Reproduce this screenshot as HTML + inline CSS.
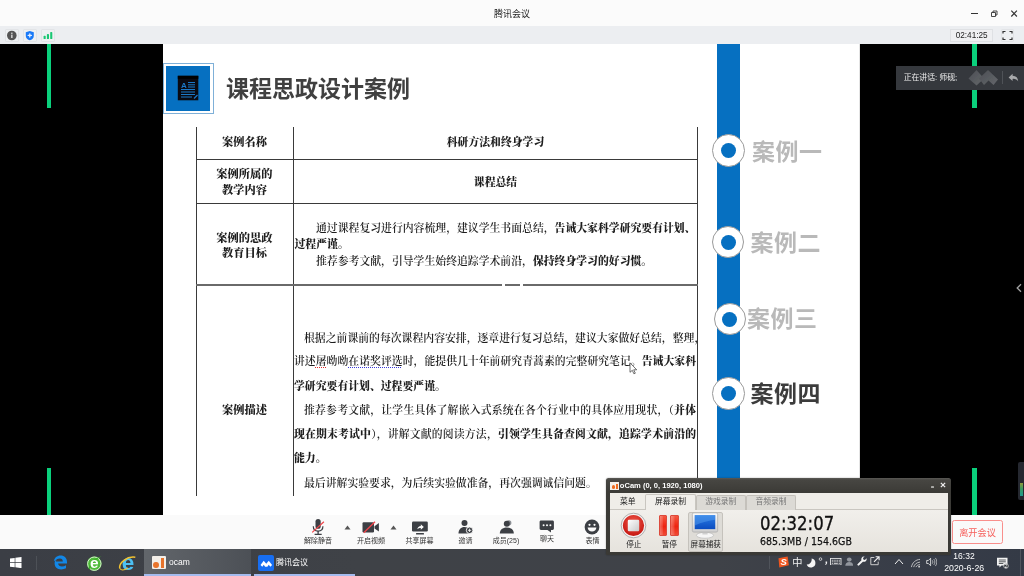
<!DOCTYPE html>
<html lang="zh-CN">
<head>
<meta charset="utf-8">
<title>腾讯会议</title>
<style>
*{box-sizing:border-box;margin:0;padding:0}
html,body{width:1024px;height:576px;overflow:hidden;background:#000}
body{position:relative;font-family:"Liberation Sans","Noto Sans CJK SC",sans-serif;color:#222}
.abs{position:absolute}
/* ---------- title bar ---------- */
#titlebar{left:0;top:0;width:1024px;height:26px;background:#fbfbfb}
#titlebar .ttl{left:0;width:1024px;top:7.400px;text-align:center;font-size:9px;line-height:14px;color:#222}
#topbar{left:0;top:26px;width:1024px;height:18px;background:#eceef1}
.tbtn{top:3px;width:13.500px;height:13px;background:#eef0f2;border:1px solid #e2e4e7;border-radius:1px}
#timer{left:950.400px;top:3.300px;width:42.500px;height:12.600px;background:#eff0f2;border:1px solid #dfe1e4;font-size:8.200px;line-height:11.200px;text-align:center;color:#222}
#titlebar>*,#topbar>*,#bbar>*,#taskbar>*,#ocam>*,.ov{filter:blur(.3px)}
/* ---------- stage ---------- */
#stage{left:0;top:44px;width:1024px;height:471px;background:#000}
.gbar{width:4.300px;background:#0ad07c}
#slide{left:163px;top:0;width:697px;height:471px;background:#fff;overflow:hidden;filter:blur(.35px)}
#slide .title{left:63px;top:27px;font-size:23px;line-height:36px;font-weight:700;color:#404040;white-space:nowrap}
.hl{background:#3a3a3a;height:1.3px}
.vl{background:#3a3a3a;width:1.3px}
.cell{font-family:"Liberation Serif","Noto Serif CJK SC",serif;font-size:10.85px;font-weight:600;color:#1e1e1e;white-space:nowrap;margin-top:-.8px}
.b{font-weight:900}
.ln{line-height:16px;text-align:justify;text-align-last:justify}
.wr{text-decoration:underline dotted #e02a2a 1.100px;text-underline-offset:2px}
.wb{text-decoration:underline dotted #3a3ad8 1.100px;text-underline-offset:2px}
.lab{text-align:center;font-weight:900;width:97px;left:33px;line-height:16px;font-size:11.250px}
.case{font-size:23px;letter-spacing:.5px;font-weight:700;line-height:30px;color:#b9b9b9;white-space:nowrap;margin-top:1px}
.ring{width:32px;height:32px;border-radius:50%;background:#fff;border:1.700px solid #9a9a9a;display:flex;align-items:center;justify-content:center}
.ring i{display:block;width:15px;height:15px;border-radius:50%;background:#0670c1}
/* ---------- bottom bar ---------- */
#bbar{left:0;top:514.600px;width:1024px;height:34.400px;background:#fafafa}
.bl{top:21px;font-size:7px;line-height:10px;color:#333;text-align:center;width:50px;white-space:nowrap}
.ot{top:17px;font-size:7.800px;line-height:14px;text-align:center;color:#222;white-space:nowrap}
.ol{top:60.500px;font-size:7.600px;line-height:11px;text-align:center;color:#222;white-space:nowrap}
.pb{top:37.300px;width:8.300px;height:21.200px;border-radius:1px;background:linear-gradient(90deg,rgba(255,255,255,.30),rgba(255,255,255,.12) 45%,rgba(255,255,255,0) 55%),linear-gradient(#f4563f,#ee2410 55%,#f04a34);border:.6px solid #dc4a3c}
#taskbar{left:0;top:549px;width:1024px;height:27px;background:linear-gradient(90deg,#3b3e45 0%,#3f4247 35%,#3f4248 70%,#383d48 88%,#343a46 100%)}
</style>
</head>
<body>
<!-- title bar -->
<div id="titlebar" class="abs">
  <div class="abs ttl">腾讯会议</div>
  <svg class="abs" style="left:966px;top:5px" width="56" height="16" viewBox="0 0 56 16">
    <path d="M5 8.5h7" stroke="#333" stroke-width="1" fill="none"/>
    <path d="M25.5 7.5h4v4h-4z M27 7.5v-1.5h4v4h-1.5" stroke="#333" stroke-width="0.9" fill="none"/>
    <path d="M45.300 5.700l5.600 5.800M50.900 5.700l-5.600 5.800" stroke="#333" stroke-width="1.150" fill="none"/>
  </svg>
</div>
<div id="topbar" class="abs">
  <div class="abs tbtn" style="left:5px"></div>
  <div class="abs tbtn" style="left:23px"></div>
  <div class="abs tbtn" style="left:41px"></div>
  <svg class="abs" style="left:5px;top:3px" width="50" height="13" viewBox="0 0 50 13">
    <circle cx="6.8" cy="6.5" r="4.8" fill="#555"/>
    <rect x="6.2" y="5.6" width="1.3" height="3.4" fill="#e6e6e6"/><rect x="6.2" y="3.6" width="1.3" height="1.3" fill="#e6e6e6"/>
    <path d="M24.8 2l4 1.3v3.4c0 2.4-1.8 3.9-4 4.6-2.200-.7-4-2.200-4-4.600V3.300z" fill="#1a7af8"/>
    <path d="M24.800 4.800v3.200M23.200 6.400h3.200" stroke="#e6efff" stroke-width="1.300" stroke-linecap="round"/>
    <rect x="38.600" y="6.800" width="2.100" height="3.300" rx=".7" fill="#1ac773"/>
    <rect x="41.900" y="5.100" width="2.100" height="5" rx=".7" fill="#1ac773"/>
    <rect x="45.200" y="3" width="2.100" height="7.100" rx=".7" fill="#1ac773"/>
  </svg>
  <div id="timer" class="abs">02:41:25</div>
  <div class="abs tbtn" style="left:1000.500px;width:13.500px"></div>
  <svg class="abs" style="left:1001px;top:3px" width="13" height="13" viewBox="0 0 13 13">
    <path d="M2 4.500V2.500h2.500M8.500 2.500H11v2M11 8.500v2H8.500M4.500 10.500H2v-2" stroke="#333" stroke-width="1.200" fill="none"/>
  </svg>
</div>

<!-- stage -->
<div id="stage" class="abs">
  <div class="abs gbar" style="left:46.500px;top:0;height:64px"></div>
  <div class="abs gbar" style="left:46.500px;top:423.700px;height:47.300px"></div>
  <div class="abs gbar" style="left:972.400px;top:0;height:64px;width:4.400px"></div>
  <div class="abs gbar" style="left:972.400px;top:423.700px;height:47.300px;width:4.400px"></div>


  <!-- speaking overlay -->
  <div class="abs" style="left:896.200px;top:21.600px;width:128px;height:24.100px;background:#35383d"></div>
  <div class="abs ov" style="left:903.700px;top:28.300px;font-size:7.900px;line-height:12px;color:#ececec;white-space:nowrap;letter-spacing:-.05px">正在讲话: 师砚;</div>
  <svg class="abs" style="left:964px;top:22px" width="40" height="24" viewBox="0 0 40 24">
    <defs><filter id="bl" x="-20%" y="-20%" width="140%" height="140%"><feGaussianBlur stdDeviation=".7"/></filter>
    <linearGradient id="dg" x1="0" y1="0" x2="1" y2="1"><stop offset="0" stop-color="#4b4e53"/><stop offset="1" stop-color="#64676b"/></linearGradient></defs>
    <g filter="url(#bl)">
      <path d="M4.500 12.500L12.500 4l7.500 8.500-7.500 7z" fill="url(#dg)"/>
      <path d="M15 12.500L24 4l10 9.500-4.500 5.500-5-4.500-4.500 4.500z" fill="url(#dg)"/>
    </g>
  </svg>
  <div class="abs" style="left:1001.800px;top:27px;width:1px;height:13px;background:#4f5257"></div>
  <svg class="abs ov" style="left:1008px;top:28.500px" width="11" height="10" viewBox="0 0 11 10">
    <path d="M4.600 .8L.6 4.400l4 3.600V5.900c2.600-.2 4.400.6 5.600 2.600C10 4.800 8.200 2.900 4.600 2.800z" fill="#a9aaac"/>
  </svg>
  <svg class="abs" style="left:1014.500px;top:239px" width="8" height="10" viewBox="0 0 8 10"><path d="M6 1.300L2.200 5 6 8.700" stroke="#a2a2a2" stroke-width="1.300" fill="none"/></svg>
  <!-- right edge volume widget -->
  <div class="abs" style="left:1018px;top:418px;width:8px;height:38px;background:#252830;border-radius:2px"></div>
  <div class="abs" style="left:1020px;top:439.300px;width:2.700px;height:13px;background:linear-gradient(#8f9a3c,#379a62 45%,#219a8e)"></div>
  <div id="slide" class="abs">
    <!-- header icon -->
    <div class="abs" style="left:0.200px;top:19.200px;width:50.800px;height:51px;border:1px solid #7fb0d8;background:#fff"></div>
    <div class="abs" style="left:3px;top:22px;width:44.400px;height:45.200px;background:#0670c1"></div>
    <svg class="abs" style="left:14px;top:31px" width="23" height="27" viewBox="0 0 23 27">
      <rect x="0.800" y="0.800" width="20.500" height="24.500" fill="#0a0a12"/>
      <rect x="0.800" y="0.800" width="20.500" height="3" fill="#000"/>
      <text x="4" y="12.500" font-family="Liberation Sans, sans-serif" font-weight="700" font-size="8" fill="#1b78c8">A</text>
      <path d="M11 7.500h7M11 9.800h7M11 12h7M4 14.500h14M4 17h14M4 19.500h14M4 22h11" stroke="#1b78c8" stroke-width="1"/>
      <path d="M17 23.500l3.500-3.500" stroke="#1b78c8" stroke-width="1.200"/>
    </svg>
    <div class="abs title">课程思政设计案例</div>

    <!-- table lines (coords relative to slide: x-163, y-44) -->
    <div class="abs vl" style="left:32.800px;top:83px;height:369px"></div>
    <div class="abs vl" style="left:129.800px;top:83px;height:369px"></div>
    <div class="abs vl" style="left:533.800px;top:83px;height:369px"></div>
    <div class="abs hl" style="left:33px;top:115px;width:502px"></div>
    <div class="abs hl" style="left:33px;top:158.800px;width:502px"></div>
    <div class="abs hl" style="left:33px;top:240.400px;width:502px;height:1.700px;background:#6a6a6a"></div>
    <div class="abs" style="left:338.500px;top:239px;width:3px;height:4px;background:#fff"></div>
    <div class="abs" style="left:356.800px;top:239px;width:3.200px;height:4px;background:#fff"></div>
    <!-- row labels -->
    <div class="abs cell lab" style="top:91px">案例名称</div>
    <div class="abs cell lab" style="top:123.100px">案例所属的<br>教学内容</div>
    <div class="abs cell lab" style="top:187.500px;line-height:15.500px">案例的思政<br>教育目标</div>
    <div class="abs cell lab" style="top:358.500px">案例描述</div>
    <!-- row 1/2 content -->
    <div class="abs cell b" style="left:131px;width:403px;text-align:center;top:91px;line-height:16px">科研方法和终身学习</div>
    <div class="abs cell b" style="left:131px;width:403px;text-align:center;top:130.500px;line-height:16px">课程总结</div>
    <!-- row 3 content -->
    <div class="abs cell ln" style="left:153px;top:177px;width:379px">通过课程复习进行内容梳理，建议学生书面总结，<span class="b">告诫大家科学研究要有计划、</span></div>
    <div class="abs cell" style="left:131.500px;top:193px;line-height:16px"><span class="b">过程严谨。</span></div>
    <div class="abs cell" style="left:153px;top:209.500px;line-height:16px">推荐参考文献，引导学生始终追踪学术前沿，<span class="b">保持终身学习的好习惯。</span></div>
    <!-- row 4 content -->
    <div class="abs cell ln" style="left:141px;top:286.800px;width:390px">根据之前课前的每次课程内容安排，逐章进行复习总结，建议大家做好总结，整理，</div>
    <div class="abs cell ln" style="left:131px;top:310px;width:402px">讲述<span class="wr">屠</span>呦呦<span class="wb">在诺奖评选</span>时，能提供几十年前研究青蒿素的完整研究笔记。<span class="b">告诫大家科</span></div>
    <div class="abs cell" style="left:131px;top:334.300px;line-height:16px"><span class="b">学研究要有计划、过程要严谨。</span></div>
    <div class="abs cell ln" style="left:141px;top:358.800px;width:392px">推荐参考文献，让学生具体了解嵌入式系统在各个行业中的具体应用现状，（<span class="b">并体</span></div>
    <div class="abs cell ln" style="left:131px;top:382.600px;width:402px"><span class="b">现在期末考试中</span>），讲解文献的阅读方法，<span class="b">引领学生具备查阅文献，追踪学术前沿的</span></div>
    <div class="abs cell" style="left:131px;top:407px;line-height:16px"><span class="b">能力。</span></div>
    <div class="abs cell" style="left:141px;top:431.300px;line-height:16px">最后讲解实验要求，为后续实验做准备，再次强调诚信问题。</div>
    <svg class="abs" style="left:466px;top:318px" width="9" height="13" viewBox="0 0 9 13"><path d="M1 .8v9.500l2.300-2 1.600 3.500 1.400-.6-1.600-3.400h3z" fill="#fff" stroke="#333" stroke-width=".7"/></svg>
    <!-- right nav -->
    <div class="abs" style="left:554px;top:0;width:23.300px;height:471px;background:#0670c1"></div>
    <div class="abs ring" style="left:549.200px;top:90.200px;width:33px;height:33px"><i></i></div>
    <div class="abs ring" style="left:549.200px;top:182.100px"><i></i></div>
    <div class="abs ring" style="left:550.800px;top:259.100px"><i></i></div>
    <div class="abs ring" style="left:549.200px;top:333.200px;width:32.500px;height:32.500px"><i></i></div>
    <div class="abs case" style="left:589px;top:92px">案例一</div>
    <div class="abs case" style="left:587.500px;top:183px">案例二</div>
    <div class="abs case" style="left:584px;top:259px">案例三</div>
    <div class="abs case" style="left:587.500px;top:333.500px;color:#3c3c3c">案例四</div>
    <div class="abs" style="left:695.500px;top:0;width:1.500px;height:471px;background:#e4e4e4"></div>
  </div>
</div>

<div id="bbar" class="abs">
  <!-- mic muted -->
  <svg class="abs" style="left:308px;top:3px" width="20" height="19" viewBox="0 0 20 19">
    <rect x="7.500" y="1" width="5.200" height="9.800" rx="2.600" fill="#3c3f44"/>
    <path d="M5.300 8.300c0 3 2 4.800 4.800 4.800s4.800-1.800 4.800-4.800" stroke="#3c3f44" stroke-width="1.200" fill="none"/>
    <path d="M10.100 13.100v2.800M6.600 16.300h7.100" stroke="#3c3f44" stroke-width="1.300" fill="none"/>
    <path d="M4.200 14.400L15.900 3.700" stroke="#f0444a" stroke-width="1.200"/>
  </svg>
  <div class="abs bl" style="left:293px">解除静音</div>
  <svg class="abs" style="left:344px;top:10px" width="7" height="5" viewBox="0 0 7 5"><path d="M3.500 .5L6.500 4.500H.5z" fill="#555"/></svg>
  <!-- video off -->
  <svg class="abs" style="left:361px;top:5px" width="20" height="15" viewBox="0 0 20 15">
    <rect x="1.500" y="2.200" width="11.500" height="10.200" rx="1.200" fill="#3c3f44"/>
    <path d="M13.500 6.200l4.400-3.200v8.600l-4.400-3.200z" fill="#3c3f44"/>
    <path d="M2.750 12.800L14 1.800" stroke="#f0444a" stroke-width="1.300"/>
  </svg>
  <div class="abs bl" style="left:346px">开启视频</div>
  <svg class="abs" style="left:389.500px;top:10px" width="7" height="5" viewBox="0 0 7 5"><path d="M3.500 .5L6.500 4.500H.5z" fill="#555"/></svg>
  <!-- share screen -->
  <svg class="abs" style="left:411px;top:5px" width="18" height="16" viewBox="0 0 18 16">
    <rect x="1" y="1.500" width="15.800" height="10" rx="1.200" fill="#3c3f44"/>
    <rect x="5" y="13" width="8" height="1.500" rx=".6" fill="#3c3f44"/>
    <path d="M6.300 9.300c.3-2 1.600-3.200 3.500-3.300V4.300l3 2.700-3 2.700V8c-1.400 0-2.500.4-3.500 1.300z" fill="#fafafa"/>
  </svg>
  <div class="abs bl" style="left:394.500px">共享屏幕</div>
  <!-- invite -->
  <svg class="abs" style="left:457px;top:4.500px" width="18" height="16" viewBox="0 0 18 16">
    <circle cx="7.500" cy="4" r="3" fill="#3c3f44"/>
    <path d="M1.500 14.500c0-4 2.500-6.500 6-6.500 2 0 3.600.8 4.600 2.200V14.500z" fill="#3c3f44"/>
    <circle cx="12.600" cy="11.300" r="3.300" fill="#3c3f44" stroke="#fafafa" stroke-width=".9"/>
    <path d="M12.600 9.600v3.400M10.900 11.300h3.400" stroke="#fafafa" stroke-width=".9"/>
  </svg>
  <div class="abs bl" style="left:440.500px">邀请</div>
  <!-- members -->
  <svg class="abs" style="left:498px;top:4.500px" width="18" height="16" viewBox="0 0 18 16">
    <circle cx="10.800" cy="3.800" r="2.600" fill="#8b8e93"/>
    <circle cx="8.800" cy="4.800" r="3" fill="#3c3f44"/>
    <path d="M1.800 14.500c0-3.800 2.800-6 7-6s7 2.200 7 6z" fill="#3c3f44"/>
  </svg>
  <div class="abs bl" style="left:481px">成员(25)</div>
  <!-- chat -->
  <svg class="abs" style="left:539px;top:5px" width="16" height="13" viewBox="0 0 16 13">
    <path d="M2 .6h11.500c.8 0 1.400.6 1.400 1.400v6.600c0 .8-.6 1.400-1.400 1.400H12v2.600L8.500 10H2C1.200 10 .6 9.400.6 8.600V2C.6 1.200 1.200.6 2 .6z" fill="#3c3f44"/>
    <circle cx="4.600" cy="5.300" r="1" fill="#fafafa"/><circle cx="8" cy="5.300" r="1" fill="#fafafa"/><circle cx="11.400" cy="5.300" r="1" fill="#fafafa"/>
  </svg>
  <div class="abs bl" style="left:522px;top:19.500px">聊天</div>
  <!-- emoji -->
  <svg class="abs" style="left:584px;top:4.500px" width="16" height="16" viewBox="0 0 16 16">
    <circle cx="8" cy="8" r="7.400" fill="#3c3f44"/>
    <circle cx="5.500" cy="5.800" r="1.100" fill="#fafafa"/><circle cx="10.500" cy="5.800" r="1.100" fill="#fafafa"/>
    <path d="M3.600 8.600h8.800c-.3 2.600-2 4-4.400 4s-4.100-1.400-4.400-4z" fill="#fafafa"/>
  </svg>
  <div class="abs bl" style="left:567.500px">表情</div>
  <!-- leave -->
  <div class="abs" style="left:952px;top:5.900px;width:51px;height:24px;border:1.200px solid #f98f8c;border-radius:2.500px;color:#f6605c;font-size:9.200px;line-height:24.400px;text-align:center">离开会议</div>
</div>
<div id="taskbar" class="abs">
  <!-- start -->
  <svg class="abs" style="left:10.200px;top:7.800px" width="11.500" height="11.200" viewBox="0 0 12 12" preserveAspectRatio="none">
    <path d="M0 1.700L4.900 1v4.700H0zM5.600.9L12 0v5.700H5.600zM0 6.400h4.900v4.700L0 10.400zM5.600 6.400H12V12l-6.400-.9z" fill="#fff"/>
  </svg>
  <div class="abs" style="left:35.600px;top:6.500px;width:1px;height:14px;background:#4d5157"></div>
  <!-- edge -->
  <svg class="abs" style="left:53px;top:6.300px" width="15" height="15" viewBox="0 0 15 15">
    <path d="M.8 6.600C1.300 2.900 4 .6 7.600.6c3.800 0 6.400 2.600 6.400 6.500v1.500H5.100c.2 1.900 1.700 2.900 3.800 2.900 1.500 0 2.800-.4 4.100-1.200v3c-1.300.7-2.900 1.100-4.700 1.100-4.100 0-6.700-2.400-6.700-6.200 0-1.800.9-3.400 2.500-4.400-.7.800-1.100 1.700-1.200 2.700h6.900c0-1.700-1-2.900-2.800-2.900C4.700 3.600 2.400 4.700.8 6.600z" fill="#1387e6"/>
  </svg>
  <!-- 360 -->
  <svg class="abs" style="left:85.500px;top:5.500px" width="17" height="17" viewBox="0 0 17 17">
    <circle cx="8.300" cy="8.700" r="7.200" fill="#4fbb3a"/>
    <circle cx="8.300" cy="8.700" r="6.700" fill="none" stroke="#e4f5dc" stroke-width=".9"/>
    <path d="M2.500 13.500C3.500 7 9 2.500 15.500 1.500 11 3.500 6.500 7.500 3.600 14.500z" fill="#3fae2c"/>
    <text x="8.300" y="13.300" text-anchor="middle" font-family="Liberation Sans, sans-serif" font-weight="700" font-size="15.500" fill="#fff">e</text>
  </svg>
  <!-- IE -->
  <svg class="abs" style="left:118px;top:4px" width="19" height="20" viewBox="0 0 19 20">
    <text x="10" y="17.300" text-anchor="middle" font-family="Liberation Sans, sans-serif" font-weight="700" font-size="22.500" fill="#4cc0f3">e</text>
    <path d="M1.800 15.500C.5 10 9 3 17.300 4.300" stroke="#f1c232" stroke-width="1.500" fill="none"/>
    <path d="M1.800 15.500c1.500 2 5 1.500 8-.5" stroke="#f1c232" stroke-width="1.100" fill="none"/>
  </svg>
  <!-- ocam task -->
  <div class="abs" style="left:144px;top:0;width:106.700px;height:27px;background:linear-gradient(90deg,#62666b,#4c5056)"></div>
  <div class="abs" style="left:144px;top:24.600px;width:106.700px;height:2.400px;background:#a4bbee"></div>
  <div class="abs" style="left:151.500px;top:7px;width:14px;height:13px;background:#f3efe9;border-radius:1px"></div>
  <div class="abs" style="left:153px;top:12.500px;width:5.500px;height:6px;background:#e8742c;border-radius:50%"></div>
  <div class="abs" style="left:160.500px;top:9px;width:3px;height:10px;background:#e8742c"></div>
  <div class="abs" style="left:169px;top:7px;font-size:8.500px;line-height:13px;color:#fff">ocam</div>
  <!-- tencent meeting task -->
  <div class="abs" style="left:254px;top:24.600px;width:101px;height:2.400px;background:#a4bbee"></div>
  <div class="abs" style="left:257.700px;top:5.600px;width:16.500px;height:16px;background:#176ef2;border-radius:2px"></div>
  <svg class="abs" style="left:257.700px;top:5.600px" width="16.500" height="16" viewBox="0 0 15 14" preserveAspectRatio="none">
    <path d="M2.300 8.800L5.200 5l2.300 2.600L9.800 5l3 3.800-1.600 1.400-1.400-1.600-1.300 1.600H6.500L5.200 8.600 3.900 10.200z" fill="#fff"/>
  </svg>
  <div class="abs" style="left:276px;top:7px;font-size:8px;line-height:13px;color:#fff;white-space:nowrap">腾讯会议</div>
  <!-- tray -->
  <div class="abs" style="left:769.200px;top:7.300px;width:1.200px;height:13px;background:#50545b"></div>
  <svg class="abs" style="left:777px;top:6.500px" width="13" height="12" viewBox="0 0 13 12">
    <path d="M1.500 2.200L10.600.6l1.300 8.600-9.600 2.200z" fill="#f0561f"/>
    <text x="6.600" y="9.300" text-anchor="middle" font-family="Liberation Sans, sans-serif" font-weight="700" font-style="italic" font-size="9.500" fill="#fff">S</text>
  </svg>
  <div class="abs" style="left:792.300px;top:7px;font-size:10.200px;line-height:13px;color:#f2f2f2">中</div>
  <svg class="abs" style="left:806px;top:9px" width="10" height="10" viewBox="0 0 10 10"><path d="M5.600.6A4.500 4.500 0 1 1 .7 6.600 5 5 0 0 0 5.600.6z" fill="#f4f4f4"/></svg>
  <svg class="abs" style="left:818px;top:7.800px" width="11" height="9" viewBox="0 0 11 9">
    <circle cx="2.500" cy="2.100" r="1.300" fill="none" stroke="#e8e8e8" stroke-width=".8"/>
    <path d="M7.600 4.600h1.500v1.600L8 8H7.200l.7-1.800h-.3z" fill="#f2f2f2"/>
  </svg>
  <svg class="abs" style="left:830.300px;top:8.700px" width="11.500" height="7.600" viewBox="0 0 11.500 8" preserveAspectRatio="none">
    <rect x=".5" y=".5" width="10.500" height="7" fill="none" stroke="#e6e6e6" stroke-width=".9"/>
    <path d="M1.800 2.400h8M1.800 4h8" stroke="#e6e6e6" stroke-width=".9" stroke-dasharray="1.100 .7"/>
    <path d="M1.800 5.700h1.100M3.800 5.700h4M8.700 5.700h1.100" stroke="#e6e6e6" stroke-width=".9"/>
  </svg>
  <svg class="abs" style="left:844.800px;top:7.600px" width="8.500" height="9.300" viewBox="0 0 9 11" preserveAspectRatio="none">
    <circle cx="4.500" cy="3" r="2.500" fill="#91959c"/><path d="M.3 10.500C.3 7.500 2 6 4.500 6s4.200 1.500 4.200 4.500z" fill="#91959c"/>
  </svg>
  <svg class="abs" style="left:856.500px;top:7.200px" width="10" height="10" viewBox="0 0 11 11">
    <path d="M7.600.6a3 3 0 0 0-2.700 4L.8 8.700a1.100 1.100 0 0 0 1.600 1.600l4.100-4.100a3 3 0 0 0 4-3.600L8.700 4.400 7 3.900 6.600 2.300 8.400.6a3 3 0 0 0-.8 0z" fill="#f2f2f2"/>
  </svg>
  <svg class="abs" style="left:869.500px;top:7.300px" width="10" height="9.500" viewBox="0 0 10 9.500">
    <path d="M4.300 1.500H.8v7.200h7.400V5.600" stroke="#d9d9d9" stroke-width=".9" fill="none"/>
    <path d="M4 5.800L8.800 1M5.600.7h3.500v3.500" stroke="#f2f2f2" stroke-width="1.100" fill="none"/>
  </svg>
  <svg class="abs" style="left:894px;top:9px" width="10" height="7" viewBox="0 0 10 7"><path d="M1 6L5 1.500 9 6" stroke="#f2f2f2" stroke-width="1" fill="none"/></svg>
  <svg class="abs" style="left:910px;top:8.500px" width="11" height="10" viewBox="0 0 12 11">
    <path d="M1.500 10C2.500 5 6 2 11 1.500" stroke="#d8d8d8" stroke-width=".9" fill="none"/>
    <path d="M4 10C4.800 7 7 5 11 4.500" stroke="#d8d8d8" stroke-width=".9" fill="none"/>
    <path d="M6.500 10C7 8.500 8.500 7.500 11 7.300" stroke="#d8d8d8" stroke-width=".9" fill="none"/>
    <circle cx="10" cy="9.500" r="1" fill="#d8d8d8"/>
  </svg>
  <svg class="abs" style="left:925.500px;top:7.800px" width="11.300" height="10" viewBox="0 0 13 11" preserveAspectRatio="none">
    <path d="M.8 3.800h2l2.500-2.400v8.200L2.800 7.200h-2z" fill="none" stroke="#f2f2f2" stroke-width=".9"/>
    <path d="M7.200 3.600c.9 1.100.9 2.700 0 3.800M9 2.300c1.600 1.800 1.600 4.600 0 6.400M10.800 1c2.200 2.500 2.200 6.500 0 9" stroke="#d8d8d8" stroke-width=".8" fill="none"/>
  </svg>
  <div class="abs" style="left:934px;top:2.200px;width:60px;text-align:center;font-size:8.500px;line-height:11px;color:#fff">16:32</div>
  <div class="abs" style="left:934.200px;top:14.300px;width:60px;text-align:center;font-size:8.750px;line-height:11px;color:#fff">2020-6-26</div>
  <svg class="abs" style="left:995.800px;top:7.600px" width="13" height="12" viewBox="0 0 13 12">
    <path d="M1 .8h10.500v7.600H5.500L3.500 10.600V8.400H1z" fill="#f2f2f2"/>
    <path d="M2.800 3h7M2.800 4.800h7M2.800 6.500h4.500" stroke="#2f3339" stroke-width=".8"/>
    <circle cx="10" cy="9" r="2.300" fill="#2f3339" stroke="#cfcfcf" stroke-width=".8"/>
    <text x="10" y="10.700" text-anchor="middle" font-family="Liberation Sans, sans-serif" font-size="4.500" fill="#fff">2</text>
  </svg>
  <div class="abs" style="left:1020.300px;top:0;width:1px;height:27px;background:#50555e"></div>
</div>

<!-- oCam window -->
<div id="ocam" class="abs" style="left:606.250px;top:478px;width:344.800px;height:77px;background:linear-gradient(#5a5955,#474642 2px,#3c3b37 14px,#3a3935);border-radius:2.500px 2.500px 1px 1px;box-shadow:0 0 1.500px rgba(0,0,0,.45)">
  <div class="abs" style="left:4px;top:4.200px;width:8.800px;height:7.800px;background:#f5f1ea"></div>
  <div class="abs" style="left:5.500px;top:7.300px;width:3.600px;height:3.600px;background:#ee6a1e;border-radius:50%"></div>
  <div class="abs" style="left:10.200px;top:5.500px;width:1.800px;height:5.800px;background:#ee6a1e"></div>
  <div class="abs" style="left:13.600px;top:1.500px;font-size:7.550px;line-height:12px;font-weight:700;color:#fff;white-space:nowrap">oCam (0, 0, 1920, 1080)</div>
  <div class="abs" style="left:325px;top:7.800px;width:3.200px;height:2px;background:#a9a9a6;border-radius:.5px"></div>
  <svg class="abs" style="left:334px;top:4.300px" width="6" height="6" viewBox="0 0 7 7"><path d="M1 1l5 5M6 1L1 6" stroke="#ededed" stroke-width="1.500"/></svg>
  <!-- body -->
  <div class="abs" style="left:3.600px;top:14.600px;width:338px;height:59.700px;background:#efede8"></div>
  <div class="abs" style="left:3.600px;top:31px;width:338px;height:43.300px;background:linear-gradient(#f1efeb,#e6e3dd);border-top:1px solid #c9c6c0"></div>
  <!-- tabs -->
  <div class="abs" style="left:39px;top:16px;width:50.500px;height:16px;background:#f1efeb;border:1px solid #c9c6c0;border-bottom:none;border-radius:2px 2px 0 0"></div>
  <div class="abs" style="left:89.500px;top:17px;width:50px;height:14.500px;background:#dcdad5;border:1px solid #c4c1bb;border-bottom:none;border-radius:2px 2px 0 0"></div>
  <div class="abs" style="left:139.500px;top:17px;width:50.500px;height:14.500px;background:#dcdad5;border:1px solid #c4c1bb;border-bottom:none;border-radius:2px 2px 0 0"></div>
  <div class="abs ot" style="left:3px;width:37px">菜单</div>
  <div class="abs ot" style="left:39px;width:50.500px">屏幕录制</div>
  <div class="abs ot" style="left:89.500px;width:50px;color:#777">游戏录制</div>
  <div class="abs ot" style="left:139.500px;width:50.500px;color:#777">音频录制</div>
  <!-- stop -->
  <svg class="abs" style="left:14px;top:34px" width="27" height="27" viewBox="0 0 27 27">
    <defs><radialGradient id="rg" cx=".5" cy=".35" r=".7"><stop offset="0" stop-color="#f0564a"/><stop offset="1" stop-color="#c2120c"/></radialGradient>
    <linearGradient id="sq" x1="0" y1="0" x2="1" y2="1"><stop offset="0" stop-color="#fff"/><stop offset="1" stop-color="#c9c9c9"/></linearGradient></defs>
    <circle cx="13.500" cy="13.500" r="12.300" fill="#f4f4f4" stroke="#9c9c9c" stroke-width=".8"/>
    <circle cx="13.500" cy="13.500" r="10.600" fill="url(#rg)"/>
    <rect x="7.800" y="7.800" width="11.400" height="11.400" rx="1.200" fill="url(#sq)"/>
  </svg>
  <div class="abs ol" style="left:7.500px;width:40px">停止</div>
  <!-- pause -->
  <div class="abs pb" style="left:52.500px"></div>
  <div class="abs pb" style="left:64.200px"></div>
  <div class="abs ol" style="left:43px;width:40px">暂停</div>
  <!-- capture -->
  <div class="abs" style="left:81.500px;top:33.500px;width:35.500px;height:40.500px;background:#dedcd7;border:1px solid #c5c2bc;border-radius:2px"></div>
  <svg class="abs" style="left:85px;top:33.800px" width="28" height="27.200" viewBox="0 0 27 26" preserveAspectRatio="none">
    <defs><linearGradient id="mg" x1="0" y1="0" x2="0" y2="1"><stop offset="0" stop-color="#2a7de6"/><stop offset="1" stop-color="#0b4cc0"/></linearGradient>
    <linearGradient id="fr" x1="0" y1="0" x2="0" y2="1"><stop offset="0" stop-color="#fbfbfb"/><stop offset="1" stop-color="#cfcfcf"/></linearGradient></defs>
    <ellipse cx="13.500" cy="22.300" rx="8.300" ry="2.800" fill="#f6f6f6" stroke="#b5b5b5" stroke-width=".6"/>
    <rect x="11" y="17" width="5" height="4.500" fill="#cfcfcf"/>
    <rect x="1.300" y=".8" width="24.400" height="18.400" rx="1.500" fill="url(#fr)" stroke="#a9a9a9" stroke-width=".7"/>
    <rect x="3.600" y="3" width="19.800" height="13.400" fill="url(#mg)"/>
    <path d="M3.600 3h19.800v4.500c-6 .5-13 2.500-19.800 5.500z" fill="#5aa2f0" opacity=".45"/>
  </svg>
  <div class="abs ol" style="left:79.500px;width:40px">屏幕捕获</div>
  <!-- time -->
  <div class="abs" style="left:153.500px;top:35px;font-size:19.300px;line-height:22px;color:#111;-webkit-text-stroke:.35px #111;white-space:nowrap;transform:scaleX(.857);transform-origin:0 0;font-family:'DejaVu Sans','Liberation Sans',sans-serif">02:32:07</div>
  <div class="abs" style="left:153.500px;top:56.500px;font-size:10.500px;line-height:13px;color:#111;-webkit-text-stroke:.25px #111;white-space:nowrap;transform:scaleX(.902);transform-origin:0 0;font-family:'DejaVu Sans','Liberation Sans',sans-serif">685.3MB / 154.6GB</div>
</div>
</body>
</html>
